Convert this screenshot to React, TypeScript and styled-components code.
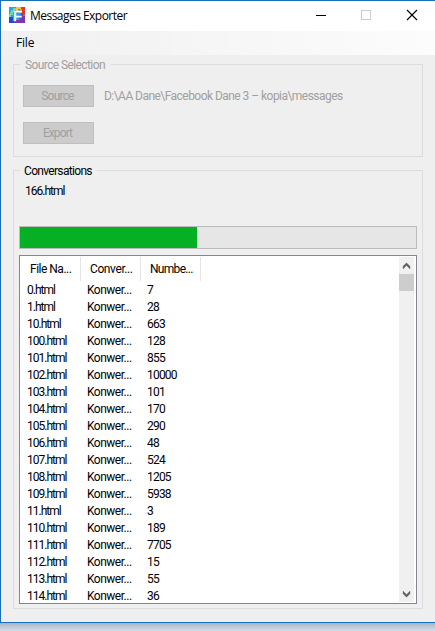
import React from "react";
import styled, { createGlobalStyle } from "styled-components";

const GlobalStyle = createGlobalStyle`
  * { box-sizing: border-box; }
  body { margin: 0; background: #d3dbe8; overflow: hidden; }
`;

const Desktop = styled.div`
  height: 631px;
  background: linear-gradient(#a9b1be 623px, #bcc5d4 626px, #d3dcea 631px);
  font: 12px/17px Roboto, "Liberation Sans", sans-serif;
  color: #000;
  overflow: hidden;
`;

const Window = styled.div`
  height: 623px;
  border: 1px solid #1a70b8;
  border-right: 0;
  background: #efefef;
  display: flex;
  flex-direction: column;
`;

const TitleBar = styled.header`
  height: 30px;
  flex: none;
  background: #fff;
  display: flex;
  align-items: center;
  padding-left: 8px;
`;

const Label = styled.span<{ $spacing?: number }>`
  white-space: pre;
  letter-spacing: ${(p) => p.$spacing ?? 0}px;
`;

const Title = styled(Label)`
  margin-left: 5px;
  font: 12px/16px "Open Sans", "Noto Sans", sans-serif;
  flex: 1;
`;

const CaptionButtons = styled.div`
  display: flex;
  height: 30px;
  margin-right: -1px;
`;

const MenuBar = styled.nav`
  height: 24px;
  flex: none;
  display: flex;
  align-items: center;
  padding: 0 0 0 15px;
  background: linear-gradient(90deg, #f0f0f0, #fcfcfc);
  font: 12px/16px "Open Sans", "Noto Sans", sans-serif;
`;

const Content = styled.main`
  padding: 3px 12px 0;
  display: flex;
  flex-direction: column;
`;

const Group = styled.fieldset<{ $height: number; $disabled?: boolean }>`
  margin: 0 0 7px;
  padding: 0 5px;
  min-width: 0;
  width: 410px;
  height: ${(p) => p.$height}px;
  border: 1px solid #dcdcdc;
  color: ${(p) => (p.$disabled ? "#a0a0a0" : "#000")};
`;

const Legend = styled.legend<{ $width: number; $indent: number }>`
  height: 13px;
  line-height: 15px;
  margin-left: 1px;
  padding: 0 0 0 ${(p) => p.$indent}px;
  width: ${(p) => p.$width}px;
`;

const ActionRow = styled.div`
  display: flex;
  align-items: center;
  gap: 10px;
  margin: 14px 0 0 4px;
  & + & { margin-top: 15px; }
`;

const Button = styled.button`
  width: 71px;
  height: 22px;
  padding: 0 2px 1px 0;
  border: 1px solid #bfbfbf;
  background: #ccc;
  color: #a0a0a0;
  font: inherit;
  line-height: 18px;
`;

const Status = styled.div`
  height: 17px;
  margin: 6px 0 0 6px;
`;

const Progress = styled.div`
  height: 23px;
  width: 398px;
  margin-top: 26px;
  border: 1px solid #bcbcbc;
  background: #e6e6e6;
`;

const ProgressFill = styled.div`
  width: 177px;
  height: 21px;
  background: #06b025;
`;

const ListView = styled.div`
  display: flex;
  justify-content: space-between;
  width: 398px;
  height: 349px;
  margin-top: 6px;
  padding: 1px;
  border: 1px solid #828790;
  background: #fff;
  overflow: hidden;
`;

const Header = styled.div`
  display: grid;
  grid-template-columns: repeat(3, 60px);
  height: 24px;
  margin-bottom: 1px;
`;

const HeaderCell = styled.div`
  border-right: 1px solid #e5e5e5;
  padding: 4px 0 0 9px;
`;

const Row = styled.div`
  display: grid;
  grid-template-columns: repeat(3, 60px);
  height: 17px;
  padding-left: 6px;
`;

const ScrollBar = styled.div`
  width: 15px;
  height: 345px;
  margin-right: 1px;
  background: #f0f0f0;
  display: flex;
  flex-direction: column;
`;

const Thumb = styled.div`
  height: 17px;
  background: #cdcdcd;
  margin-bottom: auto;
`;

const Logo = styled.svg`
  margin-bottom: 2px;
`;

const AppIcon = () => (
  <Logo width="16" height="16" viewBox="0 0 16 16" shapeRendering="crispEdges">
    <rect width="16" height="16" fill="#2f9bea" />
    <path d="M0 0h5v2H3v2H1v2H0z" fill="#29a3ef" />
    <path d="M2 3h2V1h5v2H6v2H4v3H2v2H0V7h1V5h1z" fill="#6fd6b0" />
    <path d="M7 0h6v2H9v2H7z" fill="#f6c533" />
    <path d="M12 0h4v8h-3V3h-1z" fill="#e63624" />
    <path d="M11 2h2v4h-2z" fill="#ef8b22" />
    <path d="M0 10h4v4h3v2H0z" fill="#234bd0" />
    <path d="M12 6h2v3h2v7H7v-3h4V9h1z" fill="#7b35b0" />
    <path d="M10 8h3v4h-3z" fill="#355bd7" />
    <text x="4" y="14" fontFamily="Liberation Sans, sans-serif" fontSize="15" fill="#fff" stroke="#fff" strokeWidth="0.4">F</text>
  </Logo>
);

const MinimizeIcon = () => (
  <svg width="46" height="30" shapeRendering="crispEdges">
    <path d="M18 14.5h10" stroke="#000" />
  </svg>
);

const MaximizeIcon = () => (
  <svg width="46" height="30" shapeRendering="crispEdges">
    <rect x="17.5" y="9.5" width="9" height="9" fill="none" stroke="#ccc" />
  </svg>
);

const CloseIcon = () => (
  <svg width="46" height="30">
    <path d="M17 9l10 10M27 9l-10 10" stroke="#000" strokeWidth="1.15" />
  </svg>
);

const Arrow = ({ down = false }: { down?: boolean }) => (
  <svg width="15" height="17" viewBox="0 0 15 17">
    <path
      d={down ? "M4 6l3.5 3.5L11 6v2.7L7.5 12.2 4 8.7z" : "M4 12l3.5-3.5L11 12V9.3L7.5 5.8 4 9.3z"}
      fill="#606060"
      stroke="#606060"
      strokeWidth="0.3"
    />
  </svg>
);

const rows: [string, string][] = [
  ["0", "7"], ["1", "28"], ["10", "663"], ["100", "128"], ["101", "855"],
  ["102", "10000"], ["103", "101"], ["104", "170"], ["105", "290"],
  ["106", "48"], ["107", "524"], ["108", "1205"], ["109", "5938"],
  ["11", "3"], ["110", "189"], ["111", "7705"], ["112", "15"],
  ["113", "55"], ["114", "36"],
];

export default function App() {
  return (
    <Desktop>
      <GlobalStyle />
      <Window>
        <TitleBar>
          <AppIcon />
          <Title $spacing={-0.53}>Messages Exporter</Title>
          <CaptionButtons>
            <MinimizeIcon />
            <MaximizeIcon />
            <CloseIcon />
          </CaptionButtons>
        </TitleBar>
        <MenuBar><Label $spacing={-0.2}>File</Label></MenuBar>
        <Content>
          <Group $height={99} $disabled>
            <Legend $width={91} $indent={5}>
              <Label $spacing={-0.6}>Source Selection</Label>
            </Legend>
            <ActionRow>
              <Button disabled><Label $spacing={-0.8}>Source</Label></Button>
              <Label $spacing={-0.54}>D:\AA Dane\Facebook Dane 3 – kopia\messages</Label>
            </ActionRow>
            <ActionRow>
              <Button disabled><Label $spacing={-0.9}>Export</Label></Button>
            </ActionRow>
          </Group>
          <Group $height={445}>
            <Legend $width={77} $indent={4}>
              <Label $spacing={-0.68}>Conversations</Label>
            </Legend>
            <Status><Label $spacing={-1}>166.html</Label></Status>
            <Progress><ProgressFill /></Progress>
            <ListView>
              <div>
                <Header>
                  <HeaderCell><Label $spacing={-0.5}>File Na...</Label></HeaderCell>
                  <HeaderCell><Label $spacing={-0.4}>Conver...</Label></HeaderCell>
                  <HeaderCell><Label $spacing={-0.7}>Numbe...</Label></HeaderCell>
                </Header>
                {rows.map(([file, count]) => (
                  <Row key={file}>
                    <Label $spacing={-1}>{file}.html</Label>
                    <Label $spacing={-0.5}>Konwer...</Label>
                    <Label $spacing={-0.8}>{count}</Label>
                  </Row>
                ))}
              </div>
              <ScrollBar>
                <Arrow />
                <Thumb />
                <Arrow down />
              </ScrollBar>
            </ListView>
          </Group>
        </Content>
      </Window>
    </Desktop>
  );
}
